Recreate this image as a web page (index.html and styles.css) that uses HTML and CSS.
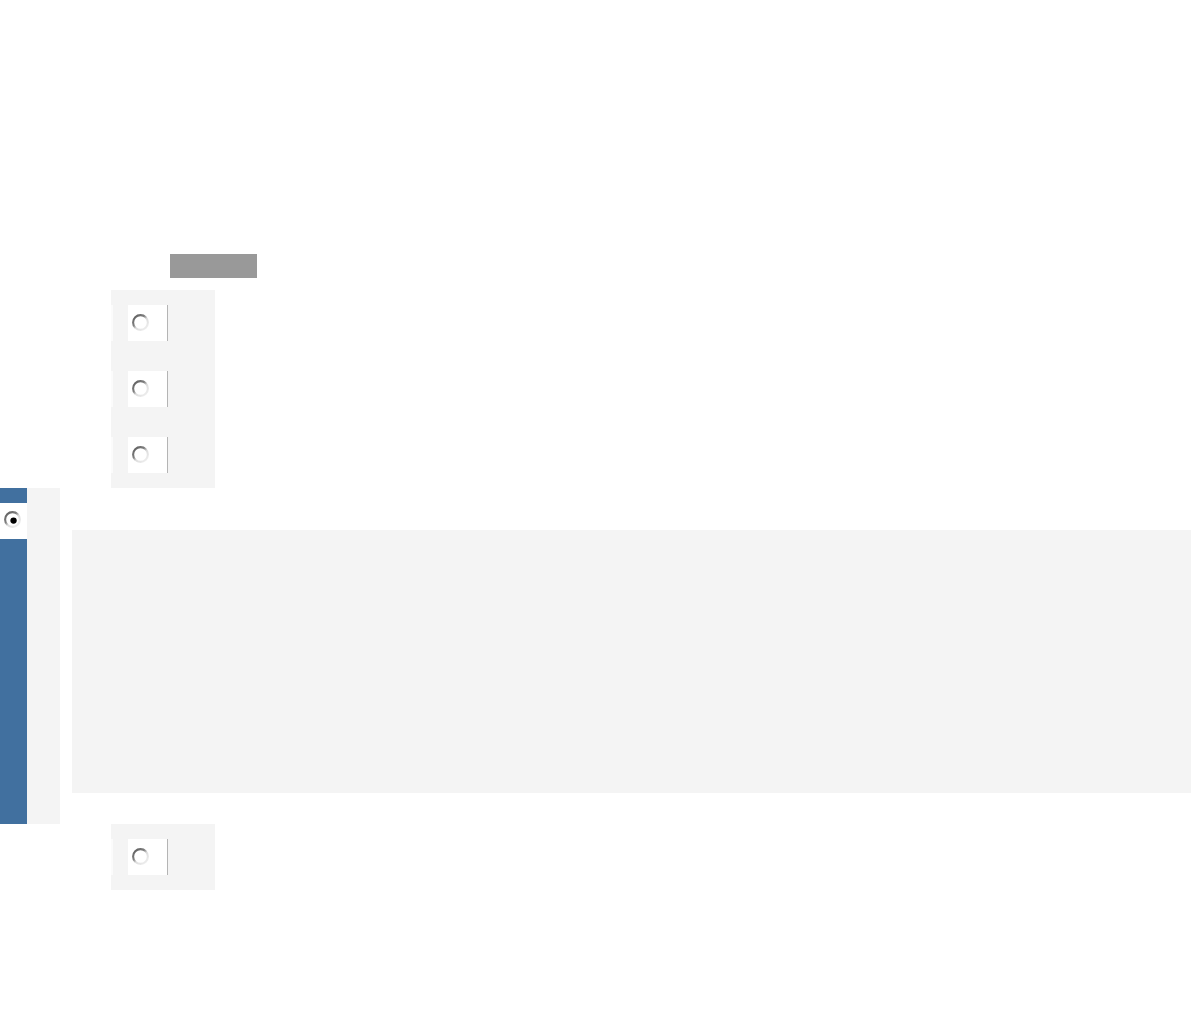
FILE: index.html
```html
<!DOCTYPE html>
<html lang="en">
<head>
    <meta charset="UTF-8">
    <meta name="viewport" content="width=device-width, initial-scale=1.0">
    <title>Options</title>
    <link rel="stylesheet" href="styles.css">
</head>
<body>
    <svg width="0" height="0" class="defs">
        <defs>
            <linearGradient id="ring" x1="0" y1="0" x2="0.9" y2="1">
                <stop offset="0" stop-color="#5a5a5a"/>
                <stop offset="0.4" stop-color="#7e7e7e"/>
                <stop offset="0.58" stop-color="#dcdcdc"/>
                <stop offset="1" stop-color="#f0f0f0"/>
            </linearGradient>
        </defs>
    </svg>
    <div class="page">
        <div class="toolbar">
            <span class="tag"></span>
        </div>

        <div class="options">
            <div class="row">
                <label class="choice">
                    <svg class="radio" viewBox="0 0 18 18"><circle cx="9" cy="9" r="7" fill="#fff" stroke="url(#ring)" stroke-width="2"/></svg>
                </label>
            </div>
            <div class="row">
                <label class="choice">
                    <svg class="radio" viewBox="0 0 18 18"><circle cx="9" cy="9" r="7" fill="#fff" stroke="url(#ring)" stroke-width="2"/></svg>
                </label>
            </div>
            <div class="row">
                <label class="choice">
                    <svg class="radio" viewBox="0 0 18 18"><circle cx="9" cy="9" r="7" fill="#fff" stroke="url(#ring)" stroke-width="2"/></svg>
                </label>
            </div>
        </div>

        <div class="section">
            <div class="rail">
                <label class="current">
                    <svg class="radio" viewBox="0 0 18 18"><circle cx="9" cy="9" r="7" fill="#fff" stroke="url(#ring)" stroke-width="2"/><circle cx="10" cy="10" r="3" fill="#000"/></svg>
                </label>
            </div>
            <div class="gutter"></div>
            <div class="content">
                <div class="panel"></div>
            </div>
        </div>

        <div class="options">
            <div class="row">
                <label class="choice">
                    <svg class="radio" viewBox="0 0 18 18"><circle cx="9" cy="9" r="7" fill="#fff" stroke="url(#ring)" stroke-width="2"/></svg>
                </label>
            </div>
        </div>
    </div>
</body>
</html>
```

FILE: styles.css
```css
body{
    margin: 0;
    padding: 0;
    background-color: #ffffff;
    font-family: "Liberation Sans", Arial, sans-serif;
}
.defs{
    position: absolute;
}
.page{
    padding-top: 254px;
    display: flex;
    flex-direction: column;
}
.toolbar{
    padding-left: 170px;
    height: 24px;
    margin-bottom: 12px;
}
.tag{
    display: block;
    width: 87px;
    height: 24px;
    background-color: #999999;
}
.options{
    margin-left: 111px;
    width: 104px;
    padding: 15px 0;
    background-color: #f4f4f4;
    display: flex;
    flex-direction: column;
    gap: 30px;
}
.row{
    height: 36px;
    border-left: 2px solid #fbfbfb;
    padding-left: 15px;
}
.choice{
    display: block;
    box-sizing: border-box;
    width: 40px;
    height: 36px;
    padding: 8px 0 0 3px;
    background-color: #ffffff;
    border-right: 1px solid #b4b4b4;
}
.radio{
    display: block;
    width: 19px;
    height: 19px;
}
.section{
    display: flex;
    height: 336px;
}
.rail{
    width: 27px;
    background-color: #41709f;
    padding-top: 15px;
}
.current{
    display: block;
    box-sizing: border-box;
    height: 36px;
    padding: 7px 0 0 3px;
    background-color: #ffffff;
}
.gutter{
    width: 33px;
    background-color: #f4f4f4;
}
.content{
    flex: 1;
    margin-left: 12px;
    padding-top: 42px;
}
.panel{
    height: 263px;
    background-color: #f4f4f4;
}
```
